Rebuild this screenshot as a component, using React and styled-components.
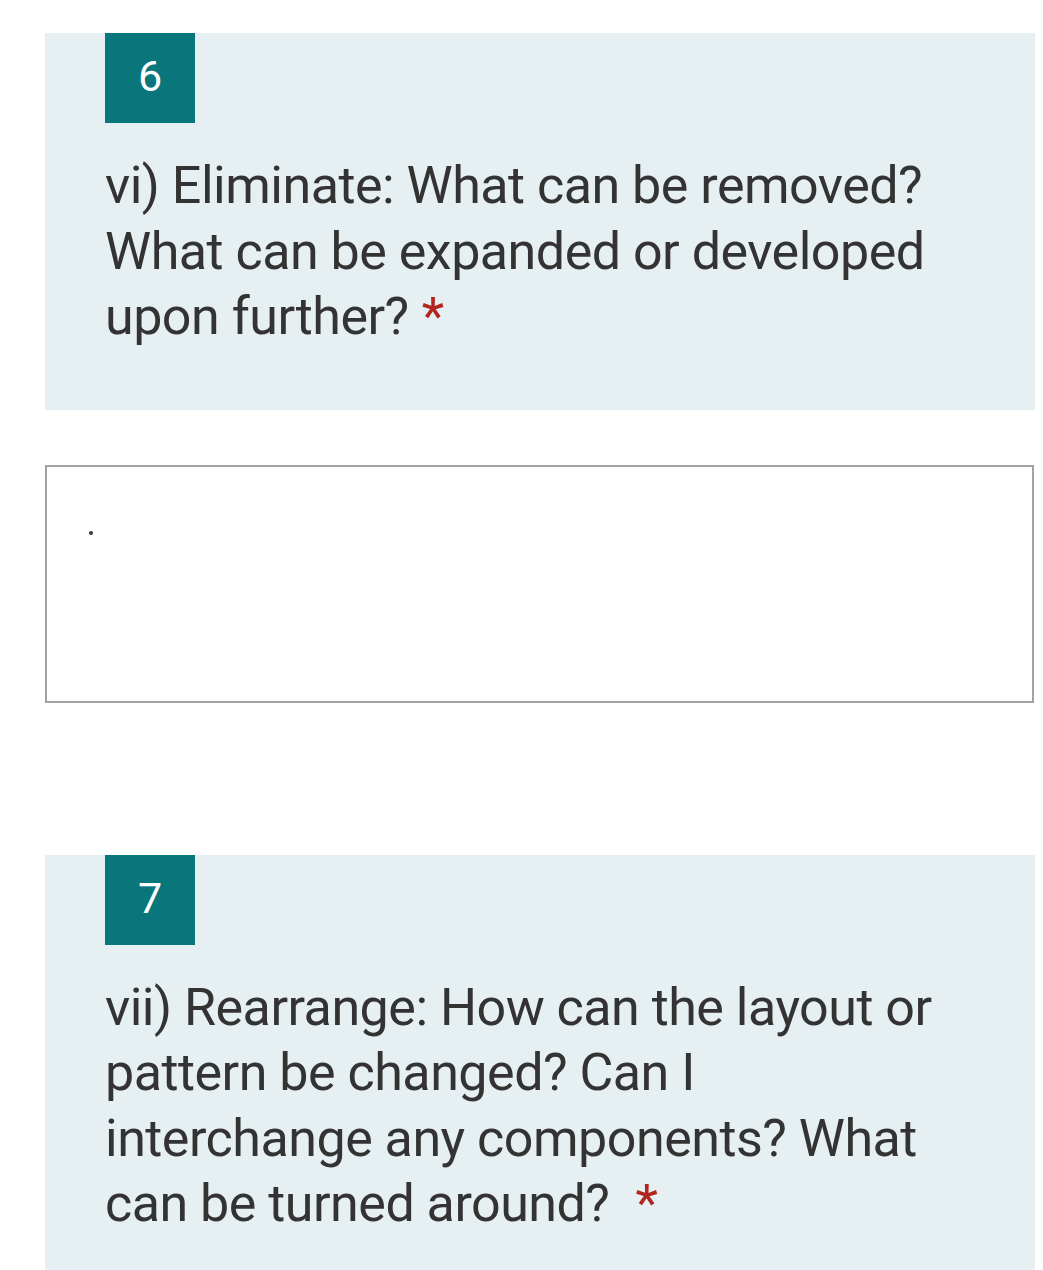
import React from 'react'
import styled, { createGlobalStyle } from 'styled-components'

const GlobalStyle = createGlobalStyle`
  body {
    margin: 0;
    background: #ffffff;
    font-family: Roboto, "Noto Sans", Arial, sans-serif;
  }
`

const Page = styled.div`
  width: 1043px;
  padding: 33px 8px 0 45px;
  box-sizing: border-box;
  display: flex;
  flex-direction: column;
`

const Card = styled.section`
  background: #e6eff2;
  padding: 0 80px 60px 60px;
  margin-bottom: ${p => p.gap || 0}px;
`

const Badge = styled.div`
  width: 90px;
  height: 90px;
  background: #08767a;
  color: #ffffff;
  font-size: 43px;
  display: flex;
  align-items: center;
  justify-content: center;
  padding-bottom: 4px;
  box-sizing: border-box;
`

const Question = styled.h2`
  margin: 30px 0 0 0;
  font-size: 52px;
  font-weight: 400;
  letter-spacing: -0.5px;
  line-height: 65.5px;
  color: #333333;
`

const Required = styled.span`
  color: #b3261e;
  margin-left: ${p => p.wide ? 26 : 13}px;
`

const AnswerBox = styled.div`
  height: 238px;
  border: 2px solid #a2a2a2;
  box-sizing: border-box;
  margin: 0 1px 152px 0;
  padding: 64px 0 0 42px;
`

const Caret = styled.span`
  display: block;
  width: 4px;
  height: 4px;
  border-radius: 50%;
  background: #333333;
`

export default function App() {
  return (
    <>
      <GlobalStyle />
      <Page>
        <Card gap={55}>
          <Badge>6</Badge>
          <Question>
            vi) Eliminate: What can be removed? What can be expanded or developed upon further?
            <Required>*</Required>
          </Question>
        </Card>
        <AnswerBox>
          <Caret />
        </AnswerBox>
        <Card>
          <Badge>7</Badge>
          <Question>
            vii) Rearrange: How can the layout or pattern be changed? Can I interchange any components? What can be turned around?
            <Required wide>*</Required>
          </Question>
        </Card>
      </Page>
    </>
  )
}
